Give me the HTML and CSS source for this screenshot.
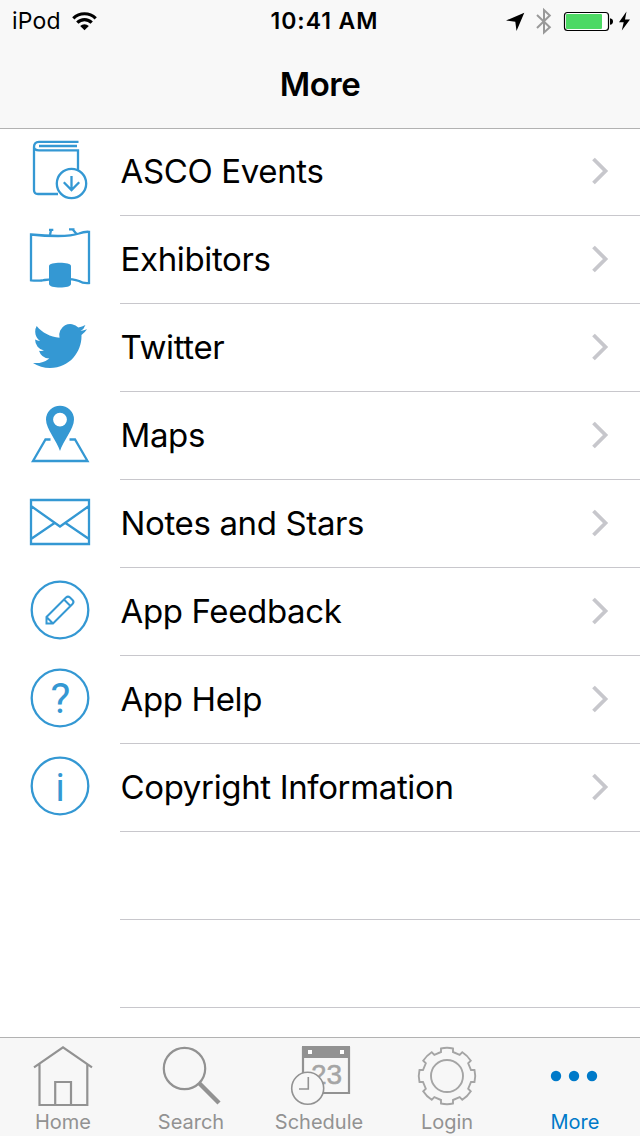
FILE: index.html
```html
<!DOCTYPE html>
<html lang="en">
<head>
<meta charset="utf-8">
<title>More</title>
<link rel="stylesheet" href="styles.css">
</head>
<body>
<div class="screen">
  <header class="header">
    <div class="status">
      <div class="carrier"><span>iPod</span>
        <svg width="26" height="20" viewBox="72 10 26 20" fill="none" stroke="#000" stroke-width="3.2"><path d="M73.3 17.3A16 16 0 0 1 95.700 17.300M77.300 21.700A10 10 0 0 1 91.700 21.700"/><path d="M80.200 25A6.200 6.200 0 0 1 88.800 25L84.500 29.200Z" fill="#000" stroke="none"/></svg>
      </div>
      <div class="clock">10:41 AM</div>
      <svg class="indicators" width="140" height="40" viewBox="500 0 140 40">
        <path d="M506 19.500L524.300 11.800L516.500 30L515.300 20.800Z"/>
        <path d="M537 14L549.800 26.300L544 31.500V9L549.800 14.500L537 27" fill="none" stroke="#999" stroke-width="2"/>
        <rect x="564.500" y="11.500" width="44" height="18" rx="3" fill="#fff" stroke="#000" stroke-width="1.200"/>
        <rect x="566" y="13" width="36" height="15" rx="1" fill="#4cd964"/>
        <path d="M610 17.200q3 .5 3 3.300t-3 3.300Z"/>
        <path d="M626.500 10.500L619 21.300H623.700L621.800 29.500L630 18.500H625Z"/>
      </svg>
    </div>
    <h1 class="title">More</h1>
  </header>

  <main class="list">
    <a class="row"><svg class="icon" viewBox="0 128 120 88"><path d="M78.500 141.800H39Q34 142 34 147V190Q34 194 38 194H58M39 146H77M34 147Q34 150.300 39 150.300H78V170"/><circle cx="71.500" cy="183.500" r="14.700"/><path d="M71.500 176V190.300M63.800 182.300L71.500 190L79.200 182.300"/></svg><span class="label">ASCO Events</span><svg class="chev" viewBox="0 0 18 28"><path d="M2.500 2L14.500 14L2.500 26"/></svg></a>
    <a class="row"><svg class="icon" viewBox="0 216 120 88"><path d="M31 234.500Q45 236 58 236Q72 236 79 233.500Q84 231.500 89 231.800V283Q83 283.500 79 281Q72 278.500 60 279Q46 279.500 42 280.500Q36 281 31 280.300Z"/><path d="M50 235L51 230M49 229.800H53.300M76.500 234L73 229.800M69 229.300H74.500"/><path class="solid" d="M49 266C49 261.800 71 261.800 71 266V284C71 288.800 49 288.800 49 284Z"/></svg><span class="label">Exhibitors</span><svg class="chev" viewBox="0 0 18 28"><path d="M2.500 2L14.500 14L2.500 26"/></svg></a>
    <a class="row"><svg class="icon" viewBox="0 304 120 88"><path class="solid" transform="translate(33 319) scale(2.250)" d="M23.953 4.570a10 10 0 01-2.825.775 4.958 4.958 0 002.163-2.723c-.951.555-2.005.959-3.127 1.184a4.920 4.920 0 00-8.384 4.482C7.690 8.095 4.067 6.130 1.640 3.162a4.822 4.822 0 00-.666 2.475c0 1.710.870 3.213 2.188 4.096a4.904 4.904 0 01-2.228-.616v.060a4.923 4.923 0 003.946 4.827 4.996 4.996 0 01-2.212.085 4.936 4.936 0 004.604 3.417 9.867 9.867 0 01-6.102 2.105c-.390 0-.779-.023-1.170-.067a13.995 13.995 0 007.557 2.209c9.053 0 13.998-7.496 13.998-13.985 0-.210 0-.420-.015-.630A9.935 9.935 0 0024 4.590z"/></svg><span class="label">Twitter</span><svg class="chev" viewBox="0 0 18 28"><path d="M2.500 2L14.500 14L2.500 26"/></svg></a>
    <a class="row"><svg class="icon" viewBox="0 392 120 88"><path d="M50.500 439.500H45.500L33 461H87.500L75 439.500H69.500"/><path class="solid" fill-rule="evenodd" d="M60 451C57 441 46 429 46 419.500A14 13.800 0 0 1 74 419.500C74 429 63 441 60 451ZM60 412.700A6.900 6.900 0 1 0 60 426.500A6.900 6.900 0 1 0 60 412.700Z"/></svg><span class="label">Maps</span><svg class="chev" viewBox="0 0 18 28"><path d="M2.500 2L14.500 14L2.500 26"/></svg></a>
    <a class="row"><svg class="icon" viewBox="0 480 120 88"><path d="M31 500H89V544H31ZM31 506L60 526.500L89 506M31 539L54.500 523M65.500 523L89 539"/></svg><span class="label">Notes and Stars</span><svg class="chev" viewBox="0 0 18 28"><path d="M2.500 2L14.500 14L2.500 26"/></svg></a>
    <a class="row"><svg class="icon" viewBox="0 568 120 88"><circle cx="60" cy="610" r="28.300"/><path stroke-width="2" d="M46.500 623.500V617L66 597.500Q68 595.700 70 597.500L72.500 600Q74.500 602 72.500 604L53 623.500ZM46.500 617L53 623.500M64 599.500L70.500 606"/></svg><span class="label">App Feedback</span><svg class="chev" viewBox="0 0 18 28"><path d="M2.500 2L14.500 14L2.500 26"/></svg></a>
    <a class="row"><svg class="icon" viewBox="0 656 120 88"><circle cx="60" cy="698" r="28.300"/><text x="60.500" y="713" font-size="42">?</text></svg><span class="label">App Help</span><svg class="chev" viewBox="0 0 18 28"><path d="M2.500 2L14.500 14L2.500 26"/></svg></a>
    <a class="row"><svg class="icon" viewBox="0 744 120 88"><circle cx="60" cy="786" r="28.300"/><text x="60" y="801" font-size="38">i</text></svg><span class="label">Copyright Information</span><svg class="chev" viewBox="0 0 18 28"><path d="M2.500 2L14.500 14L2.500 26"/></svg></a>
    <div class="row"></div>
    <div class="row"></div>
  </main>

  <nav class="tabs">
    <a class="tab"><svg viewBox="-1 1038 128 72"><path d="M34 1067.300L63 1047.300L92 1067.300M39.500 1064V1105H87.300V1064M55.200 1105V1082H71V1105"/></svg><span>Home</span></a>
    <a class="tab"><svg viewBox="127 1038 128 72"><circle cx="184.500" cy="1068.500" r="20.700"/><path stroke-width="4.500" d="M199 1083L219 1103"/></svg><span>Search</span></a>
    <a class="tab"><svg viewBox="255 1038 128 72"><path d="M303 1048H349V1093H303Z"/><path d="M302 1046H350V1058H302Z" fill="#929292" stroke="none"/><path d="M308 1050h4v4h-4ZM340 1050h4v4h-4Z" fill="#fff" stroke="none"/><text x="326.500" y="1084" font-size="28">23</text><circle cx="307.700" cy="1088.300" r="16" fill="#f7f7f7" stroke-width="1.600"/><path stroke-width="1.600" d="M308.300 1077V1089H299"/></svg><span>Schedule</span></a>
    <a class="tab"><svg viewBox="383 1038 128 72"><g transform="translate(447 1076)" stroke="#a5a5a5" stroke-width="1.900"><circle r="16"/><path d="M-6 -24V-27.500Q0 -29 6 -27.500V-24L12.700 -21.200L15.300 -23.800Q20.500 -20.500 23.800 -15.300L21.200 -12.700L24 -6H27.500Q29 0 27.500 6H24L21.200 12.700L23.800 15.300Q20.500 20.500 15.300 23.800L12.700 21.200L6 24V27.500Q0 29 -6 27.500V24L-12.700 21.200L-15.300 23.800Q-20.500 20.500 -23.800 15.300L-21.200 12.700L-24 6H-27.500Q-29 0 -27.500 -6H-24L-21.200 -12.700L-23.800 -15.300Q-20.500 -20.500 -15.300 -23.800L-12.700 -21.200Z"/></g></svg><span>Login</span></a>
    <a class="tab active"><svg viewBox="511 1038 128 72"><g fill="#007ac9" stroke="none"><circle cx="556" cy="1076" r="5.200"/><circle cx="574" cy="1076" r="5.200"/><circle cx="592" cy="1076" r="5.200"/></g></svg><span>More</span></a>
  </nav>
</div>
</body>
</html>
```
FILE: styles.css
```css
* { box-sizing: border-box; }
body { margin: 0; background: #fff; font-family: Inter, "Liberation Sans", sans-serif; color: #000; }
svg { display: block; flex: none; }
.screen { width: 640px; height: 1136px; display: flex; flex-direction: column; overflow: hidden; }
.header { position: relative; z-index: 1; height: 129px; flex: none; background: #f8f8f8; border-bottom: 1px solid #b2b2b2; }
.status { display: grid; grid-template-columns: 140px 1fr 140px; height: 40px; align-items: center; }
.carrier { display: flex; align-items: center; gap: 11px; padding-left: 12px; font-size: 23px; line-height: 40px; }
.carrier span { width: 49px; padding-top: 1px; letter-spacing: 0.2px; white-space: nowrap; }
.clock { text-align: center; padding: 1px 0 0 9px; font-size: 23px; font-weight: 600; letter-spacing: 0.95px; line-height: 40px; white-space: nowrap; }
.title { margin: 0; height: 88px; line-height: 89px; text-align: center; font-size: 33px; font-weight: 600; letter-spacing: -0.5px; }
.list { flex: 1; min-height: 0; margin-top: -1px; overflow: hidden; }
.row { height: 88px; display: flex; align-items: center; padding-right: 31px; background: linear-gradient(#c8c7cc, #c8c7cc) 120px 87px / 520px 1px no-repeat; }
.icon { width: 120px; height: 88px; fill: none; stroke: #3498d3; stroke-width: 2.3; }
.icon .solid { fill: #3498d3; stroke: none; }
.icon text { fill: #3498d3; stroke: none; font-family: Roboto, sans-serif; text-anchor: middle; }
.label { flex: 1; padding: 0 0 2px 0.5px; font-size: 33px; letter-spacing: -0.36px; line-height: 86px; white-space: nowrap; }
.chev { width: 18px; height: 28px; fill: none; stroke: #c7c7cc; stroke-width: 3.8; margin-bottom: 2px; }
.tabs { height: 99px; flex: none; display: flex; background: #f7f7f7; border-top: 1px solid #b2b2b2; overflow: hidden; }
.tab { width: 128px; flex: none; margin-left: -1px; margin-right: 1px; display: flex; flex-direction: column; align-items: center; color: #929292; font-size: 20px; }
.tab svg { width: 128px; height: 72px; fill: none; stroke: #929292; stroke-width: 2.2; }
.tab text { fill: #a5a5a5; stroke: #a5a5a5; stroke-width: 0.5; text-anchor: middle; font-family: "Liberation Sans", sans-serif; }
.tab span { line-height: 24px; white-space: nowrap; }
.active { color: #007ac9; }
```
